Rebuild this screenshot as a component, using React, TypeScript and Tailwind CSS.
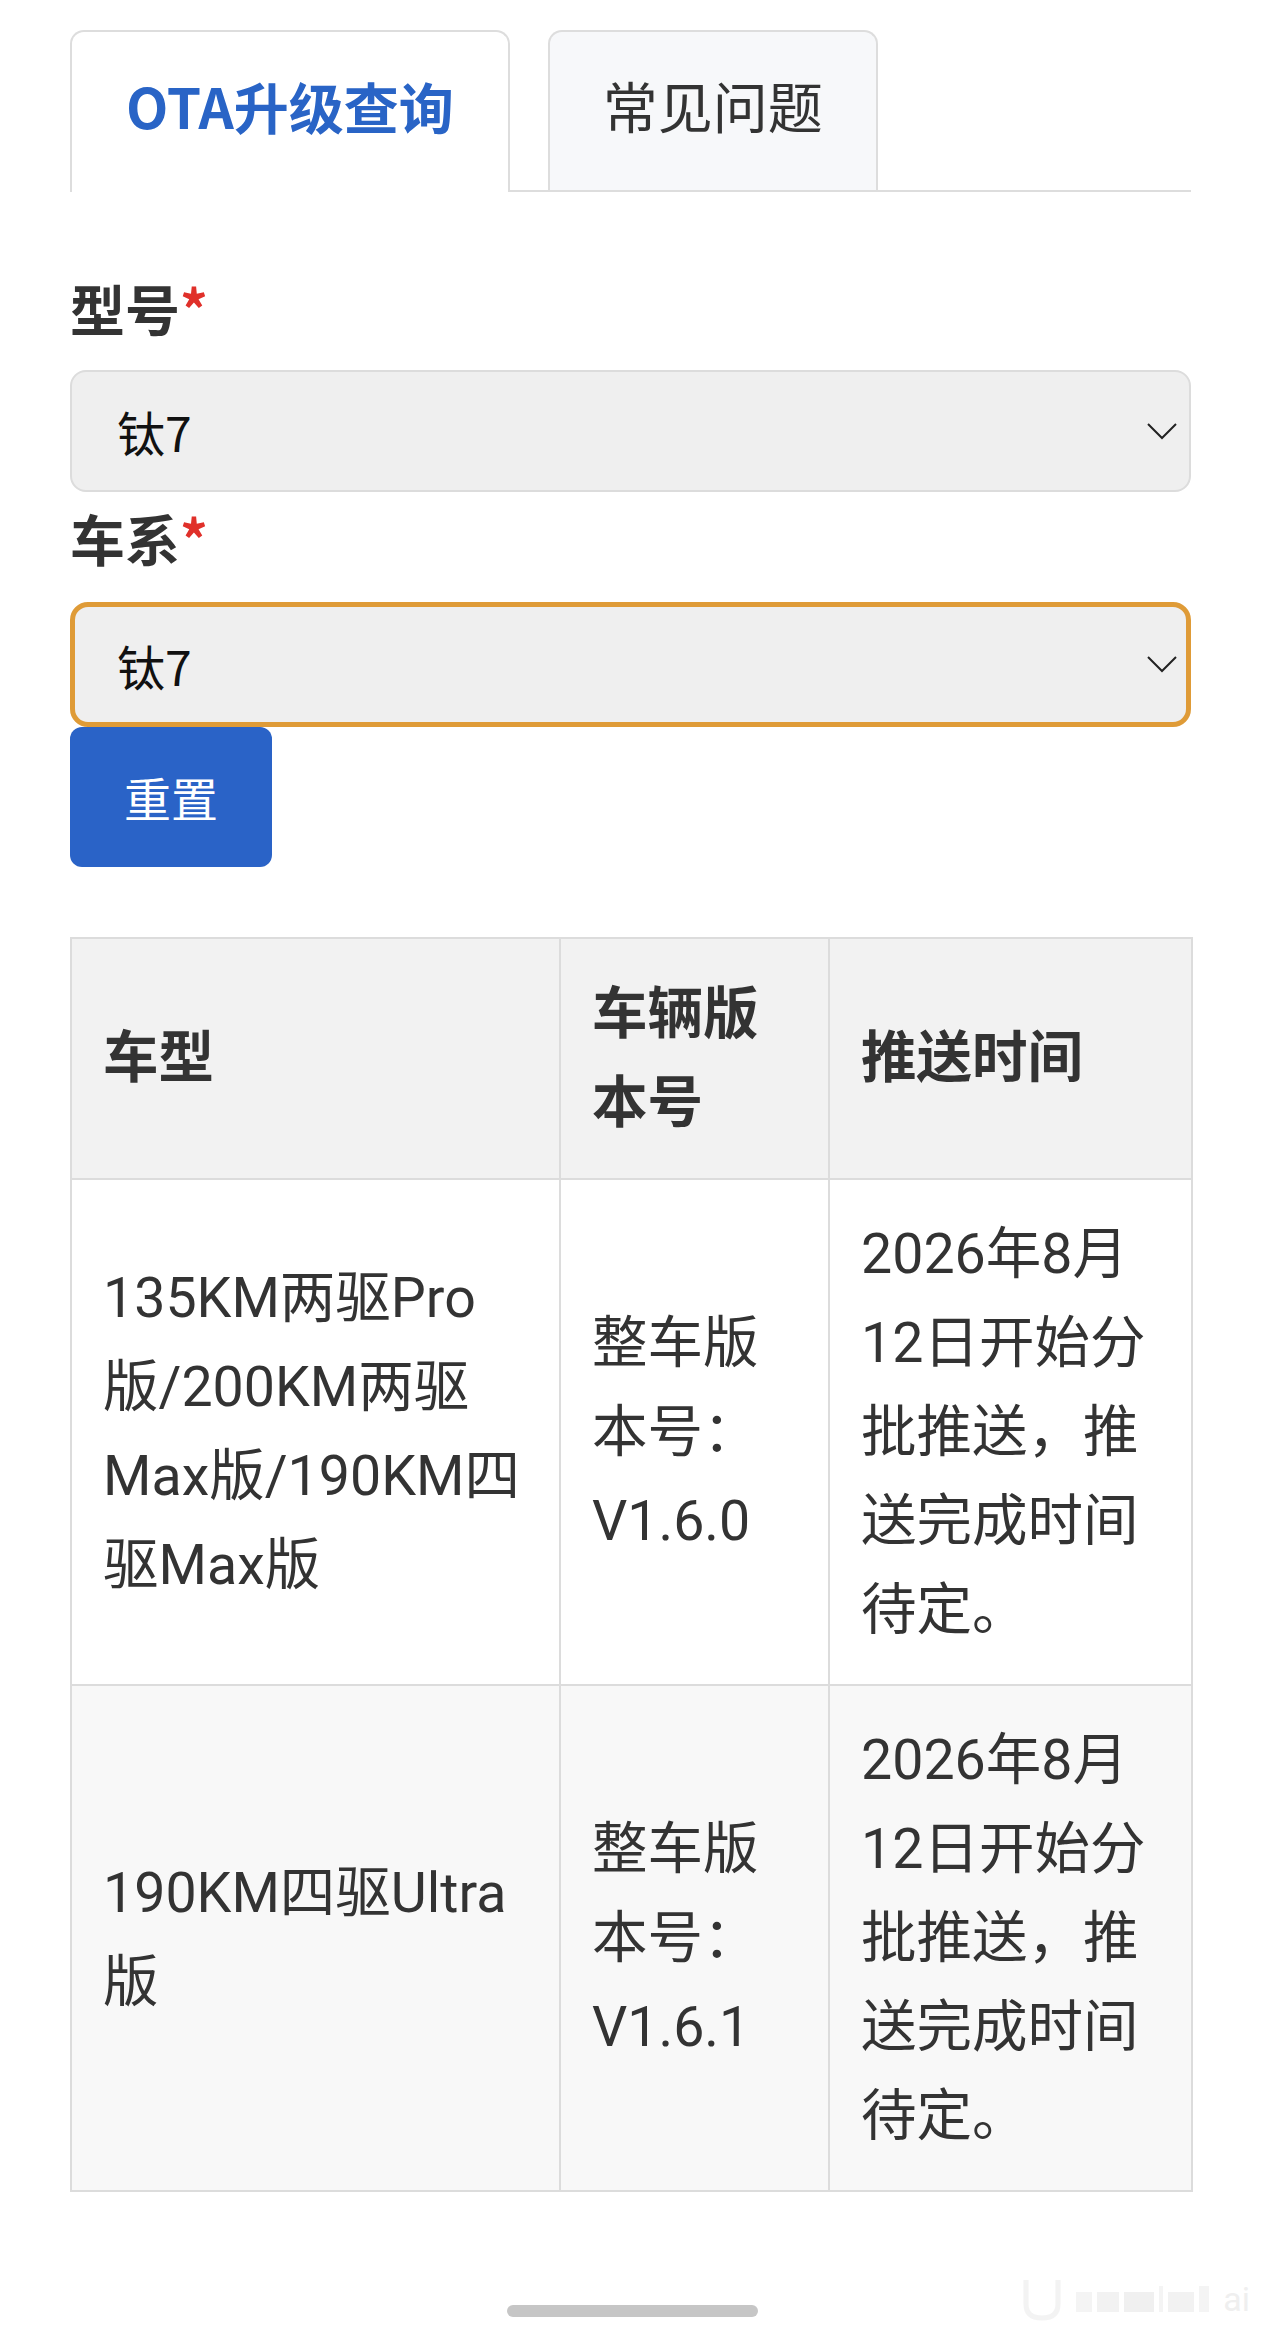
import React from 'react';

const cjk = { fontFamily: '"Noto Sans CJK SC", "Noto Sans", sans-serif' };
const body = { fontFamily: 'Roboto, "Noto Sans CJK SC", sans-serif' };

const Chevron: React.FC = () => (
  <svg width="30" height="17" viewBox="0 0 30 17" fill="none" className="shrink-0">
    <polyline points="1,1 15,15 29,1" stroke="#222" strokeWidth="2" />
  </svg>
);

interface Row {
  model: string[];
  version: string[];
  time: string[];
}

const rows: Row[] = [
  {
    model: ['135KM两驱Pro', '版/200KM两驱', 'Max版/190KM四', '驱Max版'],
    version: ['整车版', '本号：', 'V1.6.0'],
    time: ['2026年8月', '12日开始分', '批推送，推', '送完成时间', '待定。'],
  },
  {
    model: ['190KM四驱Ultra', '版'],
    version: ['整车版', '本号：', 'V1.6.1'],
    time: ['2026年8月', '12日开始分', '批推送，推', '送完成时间', '待定。'],
  },
];

const Lines: React.FC<{ lines: string[] }> = ({ lines }) => (
  <>
    {lines.map((l, i) => (
      <div key={i} className="whitespace-nowrap">
        {l}
      </div>
    ))}
  </>
);

const App: React.FC = () => {
  return (
    <div className="relative min-h-[2334px] bg-white text-[#333]" style={cjk}>
      <div className="pl-[70px] pr-[73px] pt-[30px]">
        {/* tabs */}
        <div className="flex gap-[38px] border-b-2 border-[#dddddd]">
          <div className="-mb-[2px] flex h-[162px] items-center rounded-t-[14px] border-2 border-b-0 border-[#dddddd] bg-white px-[54px] pb-[14px] text-[55px] font-bold text-[#2964c6]">
            OTA升级查询
          </div>
          <div className="flex h-[160px] items-center rounded-t-[14px] border-2 border-b-0 border-[#dddddd] bg-[#f7f8fa] px-[53px] pb-[14px] text-[55px] text-[#333]">
            常见问题
          </div>
        </div>

        {/* form */}
        <div className="mt-[76px] mb-[24px] text-[55px] font-bold leading-[78px]">
          型号<span className="text-[#e0302a]">*</span>
        </div>
        <div className="flex h-[122px] items-center justify-between rounded-[16px] border-2 border-[#dcdcdc] bg-[#efefef] pl-[45px] pr-[12px] text-[48px] text-[#111]">
          <span>钛7</span>
          <Chevron />
        </div>

        <div className="mt-[6px] mb-[26px] text-[55px] font-bold leading-[78px]">
          车系<span className="text-[#e0302a]">*</span>
        </div>
        <div className="flex h-[125px] items-center justify-between rounded-[18px] border-[5px] border-[#df9b37] bg-[#efefef] pl-[42px] pr-[9px] text-[48px] text-[#111]">
          <span>钛7</span>
          <Chevron />
        </div>

        <button className="flex h-[140px] w-[202px] items-center justify-center rounded-[12px] bg-[#2a63c7] text-[47px] text-white">
          重置
        </button>

        {/* table */}
        <table className="mt-[70px] w-[1121px] table-fixed border-collapse text-[55.5px] leading-[89px]" style={body}>
          <colgroup>
            <col className="w-[489px]" />
            <col className="w-[269px]" />
            <col className="w-[363px]" />
          </colgroup>
          <thead>
            <tr className="bg-[#f2f2f2]">
              <th className="h-[241px] border-2 border-[#dcdcdc] px-[31px] text-left align-middle font-bold">车型</th>
              <th className="border-2 border-[#dcdcdc] px-[31px] text-left align-middle font-bold">
                <Lines lines={['车辆版', '本号']} />
              </th>
              <th className="border-2 border-[#dcdcdc] px-[31px] text-left align-middle font-bold">推送时间</th>
            </tr>
          </thead>
          <tbody>
            {rows.map((r, i) => (
              <tr key={i} className={i % 2 === 1 ? 'bg-[#f8f8f8]' : 'bg-white'}>
                <td className="h-[506px] border-2 border-[#dcdcdc] px-[31px] align-middle">
                  <Lines lines={r.model} />
                </td>
                <td className="border-2 border-[#dcdcdc] px-[31px] align-middle">
                  <Lines lines={r.version} />
                </td>
                <td className="border-2 border-[#dcdcdc] px-[31px] align-middle">
                  <Lines lines={r.time} />
                </td>
              </tr>
            ))}
          </tbody>
        </table>
      </div>

      {/* home indicator */}
      <div className="mx-auto mt-[113px] h-[12px] w-[251px] rounded-full bg-[#c6c6c6]" />

      {/* faint watermark */}
      <div className="absolute bottom-[12px] right-[14px] flex items-end gap-[14px] opacity-40">
        <svg width="40" height="46" viewBox="0 0 40 46" fill="none">
          <path d="M4 4 V28 Q4 42 20 42 Q36 42 36 28 V4" stroke="#e2e2e2" strokeWidth="5" />
        </svg>
        <div className="mb-[10px] flex items-end gap-[5px]">
          <div className="h-[20px] w-[16px] bg-[#e4e4e4]" />
          <div className="h-[20px] w-[22px] bg-[#e0e0e0]" />
          <div className="h-[20px] w-[30px] bg-[#dcdcdc]" />
          <div className="h-[26px] w-[4px] bg-[#e4e4e4]" />
          <div className="h-[20px] w-[26px] bg-[#e0e0e0]" />
          <div className="h-[26px] w-[10px] bg-[#e4e4e4]" />
        </div>
        <span className="mb-[6px] text-[34px] leading-none text-[#d8d8d8]" style={body}>
          ai
        </span>
      </div>
    </div>
  );
};

export default App;
